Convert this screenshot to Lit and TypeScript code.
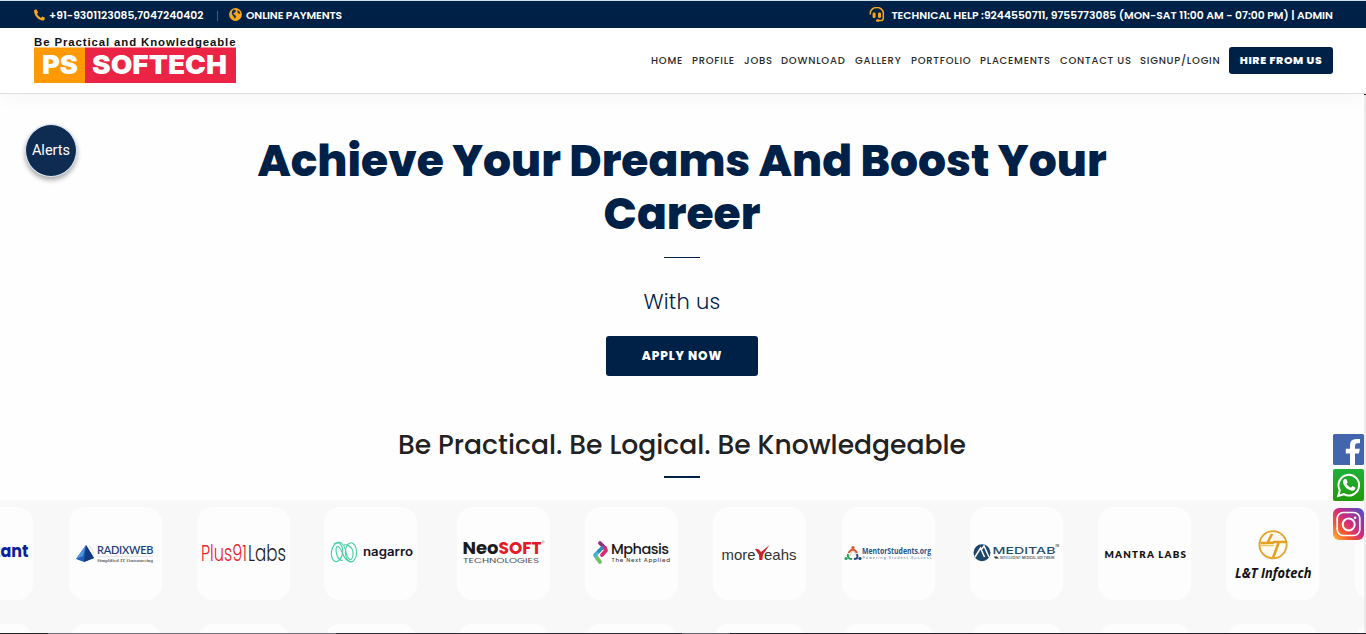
import { LitElement, html, css, svg } from "lit";
import { customElement } from "lit/decorators.js";

const NAV = ["HOME", "PROFILE", "JOBS", "DOWNLOAD", "GALLERY", "PORTFOLIO", "PLACEMENTS", "CONTACT US", "SIGNUP/LOGIN"];

/* One line of logo lettering, fitted to the given width. */
const t = (x: number, y: number, w: number, size: number, fill: string, text: string, weight = 400, family = "Poppins", style = "normal", adjust = "spacing") =>
  svg`<text x=${x} y=${y} textLength=${w} lengthAdjust=${adjust} font-size=${size} fill=${fill}
    font-weight=${weight} font-family="${family}, sans-serif" font-style=${style}>${text}</text>`;

const LOGOS = [
  svg`${t(4, 50, 84.5, 17.5, "#0b1f9c", "Cognizant", 700, "Poppins", "normal", "spacingAndGlyphs")}`,
  svg`<path d="M7 52 17 38 25 51 15 55Z" fill="#1f5fb8"/><path d="M17 38 25 51 15 55Z" fill="#123a80"/><path d="M17 38 7 52 14 49Z" fill="#4f94dd"/>
    <path d="M20 39q5 3 4 9" fill="none" stroke="#c8d2de" stroke-width=".7"/>
    ${t(28, 47.3, 56.5, 11, "#1d3f7c", "RADIXWEB", 600, "Lato")}
    <path d="M28 49.3H84" stroke="#c9cdd5" stroke-width=".6"/>
    ${t(28, 55, 56, 4.9, "#666", "Simplified IT Outsourcing", 700, "Liberation Serif")}`,
  svg`${t(4, 54, 46, 22.5, "#e8212b", "Plus91", 300, "Poppins", "normal", "spacingAndGlyphs")}${t(51, 54, 38, 22.5, "#222", "Labs", 300, "Poppins", "normal", "spacingAndGlyphs")}`,
  svg`<g fill="none" stroke="#42cfa2" stroke-width="1.1"><ellipse cx="13" cy="45.3" rx="5.6" ry="9.4" transform="rotate(8 13 45.3)"/><ellipse cx="27" cy="45.3" rx="5.6" ry="9.6"/>
    <path d="M10 37C16 33 20 36 22 45S28 55 29 48 24 37 20 38M19 53C15 55 12 48 12 43S15 38 18 45 22 54 27 54.7"/></g>
    ${t(39, 48.7, 50, 12.6, "#15152b", "nagarro", 600, "Inter", "normal", "spacingAndGlyphs")}`,
  svg`${t(5.5, 46.5, 36, 17.5, "#1b1b1f", "Neo", 700, "Poppins", "normal", "spacingAndGlyphs")}${t(41.5, 46.5, 43, 18, "#e21b26", "SOFT", 700, "Poppins", "normal", "spacingAndGlyphs")}
    ${t(6, 55.5, 76, 7.6, "#555", "TECHNOLOGIES", 400, "Poppins", "normal", "spacingAndGlyphs")}<circle cx="86" cy="35" r="1.2" fill="none" stroke="#999" stroke-width=".6"/>`,
  svg`<g fill="none" stroke-width="3.8" stroke-linecap="round" stroke-linejoin="round">
    <path d="M15 36 20 41" stroke="#8e3181"/><path d="M20 41 21 43.5 17 48" stroke="#d82b72"/>
    <path d="M14 44 10 48 12 51" stroke="#42b6cf"/><path d="M12 51 15 55" stroke="#72c267"/><path d="M17 41 14 44" stroke="#338cc0"/></g>
    ${t(26, 46.5, 58, 14.5, "#1b1b1b", "Mphasis", 500)}${t(26.5, 55, 58.5, 5.6, "#444", "The Next Applied", 500)}`,
  svg`${t(8.5, 52.5, 34, 15, "#333", "more", 400, "Liberation Sans", "normal", "spacingAndGlyphs")}${t(51, 52.5, 32.5, 15, "#333", "eahs", 400, "Liberation Sans", "normal", "spacingAndGlyphs")}
    <path d="M42 42Q45.5 40.5 48 45L56.5 38 50 47.5 49.3 53H46.3L46 48Z" fill="#c9232b"/>`,
  svg`<path d="M11 43.5 5.5 52H17Z" fill="none" stroke="#bbb" stroke-width=".7"/>
    <circle cx="11" cy="40.5" r="1.6" fill="#df562b"/><path d="M6.5 46Q11 39 15 46" fill="none" stroke="#df562b" stroke-width="2"/>
    <circle cx="4" cy="51.5" r="1.6" fill="#28a55b"/><path d="M6 47Q5 52 10 52" fill="none" stroke="#28a55b" stroke-width="2"/>
    <circle cx="18" cy="51.5" r="1.6" fill="#1f427a"/><path d="M15 47Q17 52 12 52" fill="none" stroke="#1f427a" stroke-width="2"/>
    ${t(20, 47.3, 69, 8, "#285485", "MentorStudents.org", 700, "Open Sans", "normal", "spacingAndGlyphs")}${t(20.5, 51.5, 69, 3.6, "#6e8eae", "Powering Student Success", 500, "Inter")}`,
  svg`<circle cx="12" cy="45.7" r="8.5" fill="#1d4668"/><path d="M5 50 10.5 41 14.5 50M11 43 14 39 19 50" fill="none" stroke="#fff" stroke-width="1.5"/>
    ${t(22.5, 46.8, 63, 9.5, "#294d6b", "MEDITAB", 500, "Inter", "normal", "spacingAndGlyphs")}${t(85, 40, 4, 2.8, "#555", "TM", 600, "Inter")}
    <path d="M24 49.5h3l2 2h-4z" fill="#333"/>${t(30, 52.2, 55, 3.2, "#555", "INTELLIGENT MEDICAL SOFTWARE", 600, "Inter", "normal", "spacingAndGlyphs")}`,
  svg`${t(6.5, 51, 81.5, 9.8, "#151515", "MANTRA LABS", 800, "Lato")}`,
  svg`<circle cx="47" cy="37.7" r="13.6" fill="#fffaf0" stroke="#e3a32c" stroke-width="1.8"/>
    <path d="M46 27 41.5 35.7H48M34.5 36H41M47 35H60.5M52.5 36 47 51" fill="none" stroke="#e3a021" stroke-width="2.6"/><path d="M34 38.5H48" stroke="#f1c55d" stroke-width="1.5"/>
    ${t(9, 71, 76.5, 13.6, "#111", "L&T Infotech", 700, "Open Sans", "italic", "spacingAndGlyphs")}`,
  svg``,
];

@customElement("client-logos")
class ClientLogos extends LitElement {
  static styles = css`
    :host { display: block; background: #f8f8f8; height: 134px; overflow: hidden; }
    .row { display: flex; gap: 35.25px; margin: 6.5px 0 24px -59.6px; }
    .card { flex: 0 0 93px; height: 93px; border-radius: 16px; background: #fdfdfd; }
    .card:nth-child(4) { margin-left: -1.1px; }
    .card:nth-child(5) { margin-left: 5px; }
    .card:nth-child(6) { margin-left: -.5px; }
    svg { display: block; width: 93px; height: 93px; }
  `;
  render() {
    return html`<div class="row">${LOGOS.map((l) => html`<div class="card"><svg viewBox="0 0 93 93">${l}</svg></div>`)}</div>
      <div class="row">${LOGOS.map(() => html`<div class="card"></div>`)}</div>`;
  }
}

@customElement("app-root")
class AppRoot extends LitElement {
  static styles = css`
    :host { display: block; position: relative; width: 1366px; height: 634px; overflow: hidden; background: #fefefe; font-family: Poppins, Inter, sans-serif; color: #222; }
    * { box-sizing: border-box; }
    .top { height: 28px; border-top: 1px solid #cfe2f0; background: #002147; color: #fff; display: flex; align-items: center; padding: 2px 33px 0 34px; font-size: 10.75px; font-weight: 600; white-space: nowrap; }
    .top svg { display: block; flex: none; position: relative; top: -1px; }
    .phone { margin-left: 4px; width: 155px; }
    .sep { width: 1px; height: 10px; background: #48607c; margin: 0 11px 0 13px; }
    .pay { margin-left: 4px; letter-spacing: -.1px; }
    .help { margin-left: auto; display: flex; align-items: center; gap: 6px; }
    .head { height: 66px; background: #fff; border-bottom: 1px solid #dedede; display: flex; padding: 0 33px 0 34px; justify-content: space-between; box-shadow: 0 2px 20px rgba(0,0,0,.045); }
    .logo { display: block; margin-top: 8px; }
    .nav { display: grid; grid-template-columns: 41px 52px 37px 74px 56px 69px 80px 80px 89px 104px; height: 27px; margin-top: 19px; align-items: center; font-size: 10px; font-weight: 500; letter-spacing: .75px; white-space: nowrap; color: #2a2a2a; }
    .hire { background: #002147; color: #fff; height: 27px; border-radius: 3px; font-weight: 800; font-size: 10.9px; letter-spacing: .6px; display: flex; align-items: center; justify-content: center; }
    .hero { height: 406px; display: flex; flex-direction: column; align-items: center; padding-right: 2px; text-align: center; }
    h1 { margin: 40px 0 0; font-size: 44px; line-height: 53px; font-weight: 800; color: #002147; white-space: nowrap; }
    .rule { width: 36px; height: 1px; background: #002147; margin-top: 17px; flex: none; }
    .with { margin-top: 28px; font-size: 21px; line-height: 32px; font-weight: 300; color: #002147; letter-spacing: .2px; }
    .apply { margin-top: 18px; width: 152px; height: 40px; flex: none; border-radius: 3px; background: #002147; color: #fff; font-size: 12px; font-weight: 800; letter-spacing: .9px; display: flex; align-items: center; justify-content: center; }
    h2 { margin: 49px 0 0; font-size: 26.6px; line-height: 40px; font-weight: 500; white-space: nowrap; color: #222; }
    .rule.two { height: 2px; margin-top: 11px; }
    .alerts { position: absolute; left: 25px; top: 124px; width: 52px; height: 53px; border-radius: 50%; background: #0e2c52; border: 1px solid #dfeaf5; color: #fff; font: 400 14.5px Roboto, sans-serif; display: flex; align-items: center; justify-content: center; box-shadow: 0 3px 5px rgba(0,0,0,.35); }
    .social { position: absolute; left: 1333px; top: 434px; display: flex; flex-direction: column; }
    .social svg { display: block; }
    .wa { margin: 4px 0 7px; }
    .edge { position: absolute; left: 0; bottom: 0; width: 100%; height: 1px; background: linear-gradient(90deg, #222 48px, #707074 48px 336px, #2a2a2e 336px 682px, #66666a 682px 730px, #222226 730px); }
    .track { position: absolute; right: 0; top: 94px; width: 2px; height: 539px; background: #ececec; border-top: 1px solid #222; }
  `;

  render() {
    return html`
      <div class="top">
        <svg width="11" height="12" viewBox="0 0 11 12"><path d="M2.4.2 0 1.2C0 7 4.6 11.6 10 11.6L11 8.8 8.3 7.6 6.9 8.9Q4.4 7.6 3 4.9L4.1 3.5Z" fill="#f9a61a"/></svg>
        <span class="phone">+91-9301123085,7047240402</span><span class="sep"></span>
        <svg width="13" height="13" viewBox="0 0 13 13"><circle cx="6.5" cy="6.5" r="6.4" fill="#f9a61a"/><path d="M3 3 5 1.6 7 2.2 6.2 4.4 4.4 5.2 5 6.4 7.2 8 6 11 4.6 8.4 2.8 6ZM8.7 2 10.8 4 11.3 6 9.7 5.6 8.3 4.2Z" fill="#12305a"/></svg>
        <span class="pay">ONLINE PAYMENTS</span>
        <div class="help">
          <svg width="16" height="15" viewBox="0 0 16 15"><path d="M1.3 7.5V6A6.5 5.5 0 0 1 14.3 6V11Q14.3 13.6 11.8 13.6H9" fill="none" stroke="#f9a61a" stroke-width="1.5"/><rect x="3.6" y="5.5" width="3" height="5.5" rx="1.3" fill="#f9a61a"/><rect x="9" y="5.5" width="3" height="5.5" rx="1.3" fill="#f9a61a"/><rect x="7" y="12.2" width="3.5" height="2.6" rx="1.2" fill="#f9a61a"/></svg>
          <span>TECHNICAL HELP :9244550711, 9755773085 (MON-SAT 11:00 AM - 07:00 PM) | ADMIN</span>
        </div>
      </div>
      <div class="head">
        <svg class="logo" width="202" height="48" viewBox="0 0 202 48">
          <rect y="11.5" width="51" height="35.5" fill="#ff9a06"/><rect x="51" y="11.5" width="151" height="35.5" fill="#eb2445"/>
          ${t(0, 9.8, 201.5, 11.4, "#111", "Be Practical and Knowledgeable", 700, "Liberation Sans")}
          ${t(8, 37.6, 36, 26, "#fff", "PS", 900, "Inter", "normal", "spacingAndGlyphs")}
          ${t(58, 37.6, 135, 26, "#fff", "SOFTECH", 900, "Inter", "normal", "spacingAndGlyphs")}
        </svg>
        <div class="nav">${NAV.map((n) => html`<span>${n}</span>`)}<span class="hire">HIRE FROM US</span></div>
      </div>
      <div class="hero">
        <h1>Achieve Your Dreams And Boost Your<br />Career</h1>
        <div class="rule"></div>
        <div class="with">With us</div>
        <div class="apply">APPLY NOW</div>
        <h2>Be Practical. Be Logical. Be Knowledgeable</h2>
        <div class="rule two"></div>
      </div>
      <client-logos></client-logos>
      <div class="alerts">Alerts</div>
      <div class="track"></div>
      <div class="social">
        <svg width="31" height="31" viewBox="0 0 31 31"><rect width="31" height="31" rx="1.5" fill="#4265ad"/><path d="M17 31V19.5H12.8V14.8H17V11.2Q17 5 23.2 5H27V9.3H24.5Q22 9.3 22 11.7V14.8H26.8L26 19.5H22V31Z" fill="#fff"/></svg>
        <svg class="wa" width="31" height="32" viewBox="0 0 31 32"><defs><linearGradient id="w" x2="0" y2="1"><stop stop-color="#20b038"/><stop offset="1" stop-color="#209a0c"/></linearGradient></defs><rect width="31" height="32" rx="2" fill="url(#w)"/><path d="M5.2 27 6.8 21.2A10.3 10.3 0 1 1 10.8 25.2Z" fill="none" stroke="#fff" stroke-width="2"/><path d="M11.3 10.2 13.3 10 14.7 13.2 13.5 14.9Q15 17.6 18 18.8L19.5 17 22.4 18.5Q22.2 21.8 18.8 21.7 11.3 20 10 13.5 9.7 11.5 11.3 10.2Z" fill="#fff"/></svg>
        <svg width="31" height="32" viewBox="0 0 31 32"><defs><linearGradient id="i" x1="0" y1="1" x2="1" y2="0"><stop stop-color="#ffc242"/><stop offset=".28" stop-color="#f5582c"/><stop offset=".55" stop-color="#cc2a82"/><stop offset="1" stop-color="#4552cc"/></linearGradient></defs><rect width="31" height="32" rx="6" fill="url(#i)"/><rect x="4.2" y="4.5" width="22.6" height="23" rx="6" fill="none" stroke="#fff" stroke-width="1.7"/><circle cx="15.7" cy="16.5" r="6" fill="none" stroke="#fff" stroke-width="2"/><circle cx="22" cy="9.8" r="1.3" fill="#fff"/></svg>
      </div>
      <div class="edge"></div>
    `;
  }
}
